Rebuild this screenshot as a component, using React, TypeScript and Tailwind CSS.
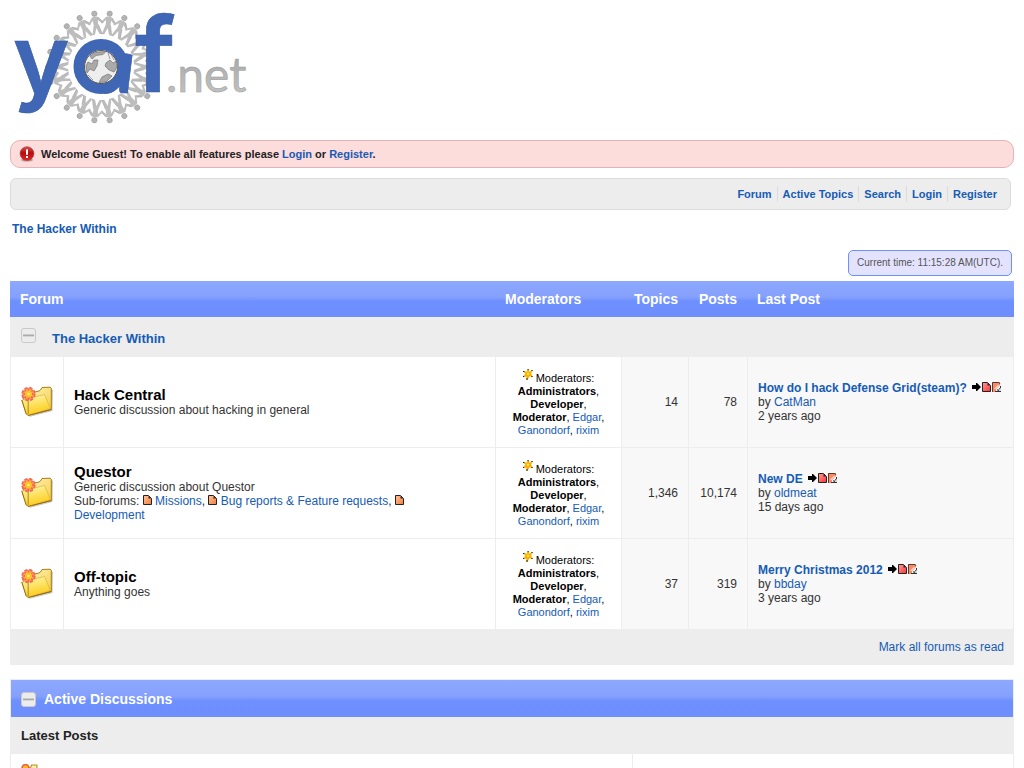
import React from "react";

const LINK = "text-[#165bb5] no-underline hover:underline";
const HEADER_BAND =
  "bg-[linear-gradient(to_bottom,#8ca8ff_0%,#85a1fd_44%,#6e8fff_56%,#6e8efb_100%)]";

type Forum = {
  name: string;
  description: string;
  subForums?: string[];
  topics: string;
  posts: string;
  last: { title: string; author: string; when: string };
};

const forums: Forum[] = [
  {
    name: "Hack Central",
    description: "Generic discussion about hacking in general",
    topics: "14",
    posts: "78",
    last: { title: "How do I hack Defense Grid(steam)?", author: "CatMan", when: "2 years ago" },
  },
  {
    name: "Questor",
    description: "Generic discussion about Questor",
    subForums: ["Missions", "Bug reports & Feature requests", "Development"],
    topics: "1,346",
    posts: "10,174",
    last: { title: "New DE", author: "oldmeat", when: "15 days ago" },
  },
  {
    name: "Off-topic",
    description: "Anything goes",
    topics: "37",
    posts: "319",
    last: { title: "Merry Christmas 2012", author: "bbday", when: "3 years ago" },
  },
];

const PEOPLE = Array.from({ length: 22 }, (_, i) => (i + 0.5) * (360 / 22));

function Logo() {
  return (
    <svg width="240" height="120" viewBox="10 8 240 120" role="img" aria-label="yaf.net" className="block overflow-visible">
      <defs>
        <linearGradient id="steel" x1="0" y1="0" x2="0" y2="1">
          <stop offset="0" stopColor="#a3a3a3" />
          <stop offset="1" stopColor="#c6c6c6" />
        </linearGradient>
      </defs>
      <g transform="translate(102 67)">
        {PEOPLE.map((a) => (
          <g key={a} transform={`rotate(${a})`}>
            <circle cx="0" cy="-53.8" r="2.7" fill="#b4b4b4" stroke="#979797" strokeWidth="0.5" />
            <path
              d="M-2.4 -50.6 L2.4 -50.6 L3.4 -49.8 L7.6 -44 L6.6 -43 L2.6 -47 L2.3 -42.5 L5 -32 L2.9 -31.5 L0 -39.5 L-2.9 -31.5 L-5 -32 L-2.3 -42.5 L-2.6 -47 L-6.6 -43 L-7.6 -44 L-3.4 -49.8 Z"
              fill="#bdbdbd"
            />
            <path d="M3.4 -49.8 L7.6 -44 M2.5 -42.5 L5 -32.4" stroke="#989898" strokeWidth="0.6" fill="none" />
          </g>
        ))}
      </g>
      <circle cx="101" cy="67" r="33" fill="#fff" />
      <g fill="#4067b5" stroke="#3358a3" strokeWidth="0.6">
        <text x="13" y="93" fontSize="96" fontFamily="Inter, sans-serif" fontWeight="600">y</text>
        <text x="95" y="93" fontSize="76" fontFamily="Lato, sans-serif" fontWeight="700" fontStyle="italic">a</text>
        <text x="135" y="92" fontSize="104" fontFamily="Inter, sans-serif" fontWeight="600">f</text>
      </g>
      <circle cx="101" cy="66.5" r="22" fill="none" stroke="#4067b5" strokeWidth="11" />
      <circle cx="101" cy="67" r="16.5" fill="#eee" stroke="#555" strokeWidth="1" />
      <g fill="#aaa" stroke="#666" strokeWidth="0.6">
        <path d="M86 66 L88 62 L92 64 L94 60 L98 60 L97 66 L94 71 L90 69 L87 73 Z" />
        <path d="M106 63 L110 60 L113 63 L116 61 L117 67 L114 72 L109 70 L105 66 Z" />
        <path d="M90 56 L94 53 L99 52 L106 51.5 L103 54.5 L96 55.5 L92 59 Z" />
        <path d="M102 77 L108 74 L112 76 L106 82 L99 82.5 Z" />
        <path d="M108 53 L110 59 M111 54 L114 60 M88 75 L93 80" />
      </g>
      <text x="166" y="92" fontSize="48" fontFamily="Lato, sans-serif" fontWeight="400" fill="url(#steel)" stroke="#999" strokeWidth="0.5">
        .net
      </text>
    </svg>
  );
}

function ErrorIcon() {
  return (
    <svg width="16" height="16" viewBox="0 0 16 16" aria-hidden="true" className="shrink-0">
      <defs>
        <linearGradient id="alert" x1="0" y1="0" x2="0" y2="1">
          <stop offset="0" stopColor="#d65050" />
          <stop offset=".45" stopColor="#b80d0d" />
          <stop offset="1" stopColor="#e02828" />
        </linearGradient>
      </defs>
      <ellipse cx="8" cy="14" rx="6" ry="1.6" fill="#b99" />
      <circle cx="8" cy="7.6" r="6.9" fill="url(#alert)" stroke="#a33" strokeWidth=".6" />
      <rect x="7" y="3.4" width="2" height="5.4" fill="#fff" />
      <rect x="7" y="10" width="2" height="2" fill="#fff" />
    </svg>
  );
}

function FolderIcon() {
  return (
    <svg width="32" height="32" viewBox="0 0 32 32" aria-hidden="true" className="block overflow-visible">
      <defs>
        <linearGradient id="folderBack" x1="0" y1="0" x2="1" y2="1">
          <stop offset="0" stopColor="#fff8c8" />
          <stop offset="1" stopColor="#f4cb3c" />
        </linearGradient>
        <linearGradient id="folderFront" x1=".2" y1="0" x2=".5" y2="1">
          <stop offset="0" stopColor="#fff6a8" />
          <stop offset="1" stopColor="#fbca12" />
        </linearGradient>
      </defs>
      <path d="M8 31 L31.5 25 L32 4 L30 3 Z" fill="#777" opacity=".4" />
      <path d="M1 9 L18 5 L19.5 4 L21 1.5 L29 1.2 L30.3 2.3 L30.3 23.5 L8 29 Z" fill="url(#folderBack)" stroke="#a87d17" strokeWidth="1" />
      <path d="M.8 14 L23.5 8.5 L29.5 22.5 L7 29.5 L5 27.5 Z" fill="url(#folderFront)" stroke="#d3ab35" strokeWidth=".6" />
      <path d="M.8 14 L5 27.5 L7 29.5 L30.3 23.5" fill="none" stroke="#9a6c10" strokeWidth="1" />
      <path d="M7.2 28 L7.2 13" stroke="#94752a" strokeWidth=".8" />
      <circle cx="7.5" cy="8" r="6.3" fill="#ff9c78" stroke="#f26a50" strokeWidth="1.8" strokeDasharray="3.2 1.75" />
      <path d="M7.5 2.5 L9 5.5 L12 4 L10.7 6.8 L13.5 8 L10.7 9.3 L12 12.3 L9 10.9 L7.5 13.9 L6.2 10.9 L3.2 12.3 L4.5 9.3 L1.5 8 L4.5 6.7 L3.2 3.9 L6.2 5.2 Z" fill="#f3502c" />
      <circle cx="7.5" cy="8" r="3.8" fill="#ffc421" />
      <circle cx="7.5" cy="8" r="1.3" fill="#ffe98a" />
    </svg>
  );
}

function CollapseIcon() {
  return (
    <svg width="15" height="15" viewBox="0 0 15 15" aria-hidden="true" className="block">
      <rect x=".5" y=".5" width="14" height="14" rx="2.5" fill="#ececec" stroke="#c9c9c9" />
      <path d="M2 7.5 H13" stroke="#aaa" strokeWidth="2" />
      <path d="M2 8.5 H13" stroke="#d5d5d5" />
    </svg>
  );
}

function StarIcon() {
  return (
    <svg width="10" height="13" viewBox="0 0 10 13" aria-hidden="true" className="inline-block align-baseline">
      <path d="M5 0 L6.4 3 L9.5 1.5 L7.8 4.5 L9.5 7.8 L6.5 7 L4 11 L3.4 7.4 L.3 7.4 L2.6 4.8 L.3 2.3 L4 3 Z" fill="#f9b000" stroke="#f9b000" strokeWidth=".5" />
      <path d="M4.6 0 h1 v1.2 h-1z M0 2 h1.4 v1 h-1.4z M8.4 1 h1.2 v1 h-1.2z M8.4 7 h1.2 v1 h-1.2z M0 7 h1.2 v1 h-1.2z M3.5 9 h1 v2 h-1z" fill="#25200f" />
      <circle cx="5" cy="4.8" r="1.2" fill="#ffe65a" />
    </svg>
  );
}

function PageIcon({ tone = "orange" }: { tone?: "orange" | "red" }) {
  return (
    <svg width="9" height="10" viewBox="0 0 9 10" aria-hidden="true" className="inline-block align-baseline">
      <defs>
        <linearGradient id={`page-${tone}`} x1="0" y1="0" x2="1" y2="1">
          <stop offset="0" stopColor={tone === "red" ? "#ff9a9a" : "#ffc49a"} />
          <stop offset="1" stopColor={tone === "red" ? "#fb3535" : "#f57b3c"} />
        </linearGradient>
      </defs>
      <path d="M.5 .5 H5.5 L8.5 3.5 V9.5 H.5 Z" fill={`url(#page-${tone})`} stroke="#222" />
      <path d="M5.5 1 L8 3.5 H5.5 Z" fill="#222" />
    </svg>
  );
}

function PostIcons() {
  return (
    <span className="ml-[5px] inline-flex gap-px">
      <svg width="9" height="10" viewBox="0 0 9 10" aria-hidden="true">
        <path d="M0 3 H4 V1 H5 L9 5 L5 9 H4 V7 H0 Z" fill="#000" />
      </svg>
      <PageIcon tone="red" />
      <svg width="9" height="10" viewBox="0 0 9 10" aria-hidden="true">
        <path d="M0 0 H8 V3 L4 7 V10 H0 Z" fill="#f98a68" />
        <path d="M.5 10 V.5 H7 L8 2" fill="none" stroke="#5a3a30" />
        <path d="M2.5 7 L6.5 3" stroke="#fff" />
        <path d="M9 5 V10 H3.5 Z" fill="#ddd" />
        <path d="M8.5 4 V6 L6.5 7.5 M3 9.5 H9 M5 7.5 L7 9" stroke="#333" fill="none" />
      </svg>
    </span>
  );
}

function Moderators() {
  return (
    <div className="text-[11px] leading-[13px] text-black">
      <div className="h-[17px] leading-[21px]">
        <StarIcon /> Moderators:
      </div>
      <b>Administrators</b>, <b>Developer</b>, <b>Moderator</b>,{" "}
      <a href="#edgar" className={LINK}>Edgar</a>,{" "}
      <a href="#ganondorf" className={LINK}>Ganondorf</a>,{" "}
      <a href="#rixim" className={LINK}>rixim</a>
    </div>
  );
}

function ForumRow({ forum }: { forum: Forum }) {
  const line = "border-l border-b border-[#ededed]";
  return (
    <tr className="h-[91px]">
      <td className={`${line} pl-2.5`}>
        <FolderIcon />
      </td>
      <td className={`${line} px-2.5 pb-0.5`}>
        <h2 className="text-[15px] leading-[17px] font-bold text-black">{forum.name}</h2>
        <p className="max-w-[350px]">
          {forum.description}
          {forum.subForums && (
            <>
              <br />
              Sub-forums:{" "}
              {forum.subForums.map((name, i) => (
                <React.Fragment key={name}>
                  {i > 0 && ", "}
                  <PageIcon />{" "}
                  <a href={`#${name}`} className={LINK}>{name}</a>
                </React.Fragment>
              ))}
            </>
          )}
        </p>
      </td>
      <td className={`${line} px-2.5 text-center`}>
        <Moderators />
      </td>
      <td className={`${line} bg-[#f8f8f8] px-2.5 text-right`}>{forum.topics}</td>
      <td className={`${line} bg-[#f8f8f8] px-2.5 text-right`}>{forum.posts}</td>
      <td className={`${line} border-r bg-[#f8f8f8] pl-2.5 whitespace-nowrap`}>
        <a href="#topic" className={`${LINK} font-bold`}>{forum.last.title}</a>
        <PostIcons />
        <br />
        by <a href="#user" className={LINK}>{forum.last.author}</a>
        <br />
        {forum.last.when}
      </td>
    </tr>
  );
}

export default function App() {
  const menu = ["Forum", "Active Topics", "Search", "Login", "Register"];
  return (
    <div className="bg-white px-2.5 pt-2 font-['Liberation_Sans',Arial,sans-serif] text-xs leading-[14px] text-[#333]">
      <header>
        <Logo />
        <div className="mt-3 flex h-7 items-center gap-1.5 rounded-[10px] border border-[#dfb6b6] bg-[#fddcdc] px-2 text-[11px] font-bold text-[#222]">
          <ErrorIcon />
          <p>
            Welcome Guest! To enable all features please{" "}
            <a href="#login" className={LINK}>Login</a> or{" "}
            <a href="#register" className={LINK}>Register</a>.
          </p>
        </div>
        <nav className="mt-2.5 mr-[3px] flex h-8 items-center justify-end rounded-md border border-[#dcdcdc] bg-[#ededed] pr-2 text-[11px] font-bold">
          {menu.map((item, i) => (
            <a
              key={item}
              href={`#${item}`}
              className={`${LINK} px-[5px] leading-4 ${i > 0 ? "border-l border-[#dcdcdc]" : ""}`}
            >
              {item}
            </a>
          ))}
        </nav>
      </header>

      <div className="mt-3 pl-0.5 font-bold">
        <a href="#home" className={LINK}>The Hacker Within</a>
      </div>

      <div className="mt-3.5 mr-0.5 flex justify-end">
        <div className="flex h-[26px] items-center rounded-[5px] border border-[#6e8fff] bg-[#e4e3ff] px-2 text-[10px] text-[#555]">
          Current time: 11:15:28 AM(UTC).
        </div>
      </div>

      <main>
        <table className="mt-[5px] w-full table-fixed border-separate border-spacing-0 text-left">
          <colgroup>
            <col className="w-[53px]" />
            <col />
            <col className="w-[126px]" />
            <col className="w-[67px]" />
            <col className="w-[59px]" />
            <col className="w-[267px]" />
          </colgroup>
          <thead>
            <tr className={`h-9 text-sm text-white ${HEADER_BAND}`}>
              <th colSpan={2} className="px-2.5">Forum</th>
              <th className="px-2.5">Moderators</th>
              <th className="pr-2.5 text-right">Topics</th>
              <th className="pr-2.5 text-right">Posts</th>
              <th className="px-2.5">Last Post</th>
            </tr>
          </thead>
          <tbody>
            <tr className="h-10 bg-[#ededed]">
              <td colSpan={6} className="px-[11px]">
                <div className="flex items-center gap-4">
                  <button type="button" aria-label="Collapse The Hacker Within" className="mb-1">
                    <CollapseIcon />
                  </button>
                  <a href="#category" className={`${LINK} mt-1 text-[13px] font-bold`}>The Hacker Within</a>
                </div>
              </td>
            </tr>
            {forums.map((forum) => (
              <ForumRow key={forum.name} forum={forum} />
            ))}
          </tbody>
          <tfoot>
            <tr className="h-[35px] bg-[#ededed]">
              <td colSpan={6} className="px-2.5 pb-0.5 text-right">
                <a href="#read" className={LINK}>Mark all forums as read</a>
              </td>
            </tr>
          </tfoot>
        </table>

        <table className="mt-3.5 w-full table-fixed border-separate border-spacing-0 border border-[#ededed] text-left">
          <colgroup>
            <col />
            <col className="w-[381px]" />
          </colgroup>
          <thead>
            <tr className={`h-[37px] text-sm text-white ${HEADER_BAND}`}>
              <th colSpan={2} className="px-2.5">
                <div className="flex items-center gap-2">
                  <button type="button" aria-label="Collapse Active Discussions" className="mt-0.5">
                    <CollapseIcon />
                  </button>
                  Active Discussions
                </div>
              </th>
            </tr>
            <tr className="h-[37px] bg-[#ededed] text-[13px] text-[#222]">
              <th colSpan={2} className="px-2.5">Latest Posts</th>
            </tr>
          </thead>
          <tbody>
            <tr>
              <td className="px-2.5 py-2.5">
                <svg width="17" height="17" viewBox="0 0 32 32" aria-hidden="true" className="block">
                  <path d="M2 9 L18 7 L20 2 H30 V24 L8 29 Z" fill="#fff0a8" stroke="#b58a26" strokeWidth="2" />
                  <circle cx="8.5" cy="7.5" r="6.5" fill="#ffb62c" stroke="#ef5a3b" strokeWidth="3" />
                </svg>
              </td>
              <td className="border-l border-[#ededed]" />
            </tr>
          </tbody>
        </table>
      </main>
    </div>
  );
}
